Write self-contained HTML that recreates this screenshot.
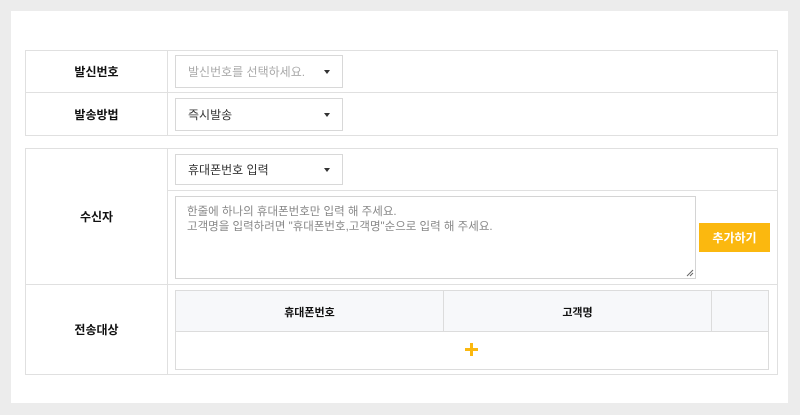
<!DOCTYPE html>
<html><head><meta charset="utf-8"><style>
*{box-sizing:border-box;margin:0;padding:0}
body{width:800px;height:415px;background:#ececec;position:relative;font-family:"Liberation Sans","Noto Sans CJK KR",sans-serif;font-size:12px;color:#222;overflow:hidden}
.panel{position:absolute;left:11px;top:11px;width:777px;height:392px;background:#fff}
.a{position:absolute}
.b{border:1px solid #e0e0e0}
.lbl{position:absolute;left:25px;width:143px;display:flex;align-items:center;justify-content:center;font-weight:bold;font-size:12px;color:#111}
.sel{position:absolute;left:175px;width:168px;border:1px solid #d8d8d8;background:#fff;padding-left:12px;display:flex;align-items:center;font-size:12px;color:#333}
.sel:after{content:"";position:absolute;right:12px;top:50%;margin-top:-2px;border-left:3.5px solid transparent;border-right:3.5px solid transparent;border-top:4px solid #333}
</style></head><body>
<div class="panel"></div>
<div class="a b" style="left:25px;top:50px;width:753px;height:86px"></div>
<div class="a" style="left:25px;top:92px;width:753px;height:1px;background:#e0e0e0"></div>
<div class="a" style="left:167px;top:50px;width:1px;height:86px;background:#e0e0e0"></div>
<div class="lbl" style="top:50px;height:42px">발신번호</div>
<div class="lbl" style="top:93px;height:42px">발송방법</div>
<div class="sel" style="top:55px;height:33px;color:#aaa">발신번호를 선택하세요.</div>
<div class="sel" style="top:98px;height:33px">즉시발송</div>

<div class="a b" style="left:25px;top:148px;width:753px;height:227px"></div>
<div class="a" style="left:167px;top:148px;width:1px;height:227px;background:#e0e0e0"></div>
<div class="a" style="left:168px;top:190px;width:610px;height:1px;background:#e0e0e0"></div>
<div class="a" style="left:25px;top:284px;width:753px;height:1px;background:#e0e0e0"></div>
<div class="lbl" style="top:148px;height:136px">수신자</div>
<div class="lbl" style="top:285px;height:89px">전송대상</div>
<div class="sel" style="top:154px;height:31px">휴대폰번호 입력</div>
<div class="a" style="left:175px;top:196px;width:521px;height:83px;border:1px solid #d4d4d4;padding:8px 11px;color:#888;font-size:11.5px;line-height:15px">한줄에 하나의 휴대폰번호만 입력 해 주세요.<br>고객명을 입력하려면 "휴대폰번호,고객명"순으로 입력 해 주세요.
<svg class="a" style="right:1px;bottom:1px" width="8" height="8"><path d="M1 7L7 1M4 7L7 4" stroke="#666" stroke-width="1"/></svg></div>
<div class="a" style="left:699px;top:223px;width:71px;height:29px;background:#fbb80f;color:#fff;font-weight:bold;font-size:12px;display:flex;align-items:center;justify-content:center">추가하기</div>
<div class="a" style="left:175px;top:290px;width:594px;height:80px;border:1px solid #dcdcdc"></div>
<div class="a" style="left:176px;top:291px;width:592px;height:41px;background:#f7f8fa;border-bottom:1px solid #dcdcdc"></div>
<div class="a" style="left:443px;top:291px;width:1px;height:41px;background:#dcdcdc"></div>
<div class="a" style="left:711px;top:291px;width:1px;height:41px;background:#dcdcdc"></div>
<div class="a" style="left:176px;top:291px;width:267px;height:41px;display:flex;align-items:center;justify-content:center;font-weight:bold;font-size:11px;color:#111">휴대폰번호</div>
<div class="a" style="left:444px;top:291px;width:267px;height:41px;display:flex;align-items:center;justify-content:center;font-weight:bold;font-size:11px;color:#111">고객명</div>
<div class="a" style="left:465px;top:348px;width:13px;height:3px;background:#fbb80f"></div>
<div class="a" style="left:470px;top:343px;width:3px;height:13px;background:#fbb80f"></div>
</body></html>
